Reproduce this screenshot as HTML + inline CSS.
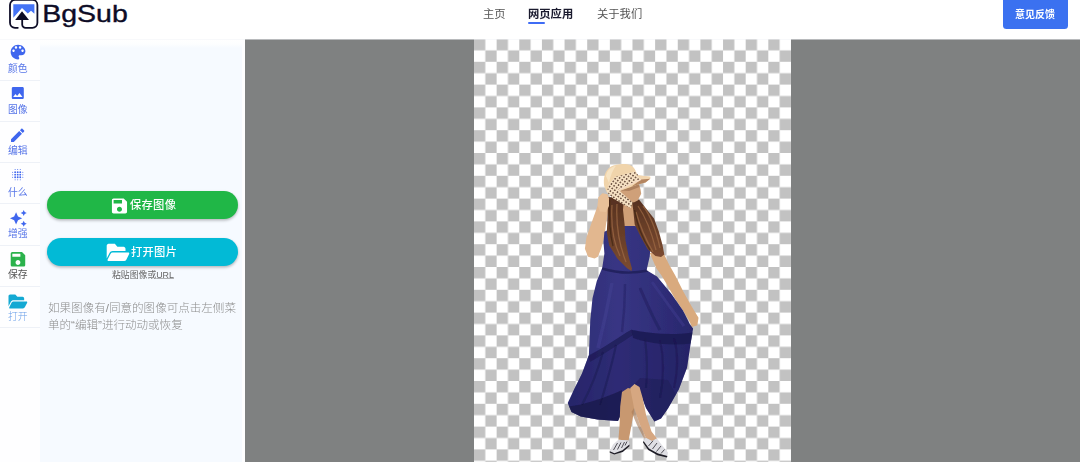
<!DOCTYPE html>
<html lang="zh-CN">
<head>
<meta charset="utf-8">
<title>BgSub</title>
<style>
*{margin:0;padding:0;box-sizing:border-box}
html,body{width:1080px;height:462px;overflow:hidden;background:#fff}
body{position:relative;font-family:"Liberation Sans","Noto Sans CJK SC",sans-serif;color:#333}
.abs{position:absolute}
/* text helper: fonts are declared at 2x and scaled down */
.t{position:absolute;white-space:nowrap;transform-origin:0 0;transform:scale(.5);line-height:1}
#header{position:absolute;left:0;top:0;width:1080px;height:39px;background:#fff;box-shadow:0 .5px 0 #f1f3f8}
#stage{position:absolute;left:244.5px;top:39px;width:836px;height:423px;background:#7f8181}
#iconcol{position:absolute;left:0;top:39px;width:245px;height:423px;background:#fefeff}
#panel{position:absolute;left:40px;top:39px;width:202px;height:423px;background:linear-gradient(#fff 0,#fdfeff 5px,#f6faff 9px,#f6faff 100%)}
.sep{position:absolute;left:0;width:40px;height:1px;background:#eef1f7}
.lbl{font-size:19.7px;font-weight:400;color:#5775e8;letter-spacing:0}
.btn{position:absolute;left:46.7px;width:191.6px;height:28.6px;border-radius:15px;box-shadow:0 1.5px 3px rgba(0,0,0,.28)}
.btxt{font-size:22.6px;color:#fff;font-weight:500;letter-spacing:.5px}
.nav{font-size:22.6px;color:#555}
</style>
</head>
<body>

<!-- ================= STAGE ================= -->
<div id="stage"></div>
<svg class="abs" style="left:473.6px;top:39px" width="317" height="423" viewBox="0 0 317 423">
  <defs>
    <pattern id="chk" width="22.64" height="22.8" patternUnits="userSpaceOnUse">
      <rect width="22.64" height="22.8" fill="#fff"/>
      <rect width="11.32" height="11.4" fill="#c2c2c2"/>
      <rect x="11.32" y="11.4" width="11.32" height="11.4" fill="#c2c2c2"/>
    </pattern>
  </defs>
  <rect width="317" height="423" fill="url(#chk)"/>
</svg>

<!-- WOMAN -->
<svg id="woman" class="abs" style="left:0;top:0" width="1080" height="462" viewBox="0 0 1080 462">
  <defs>
    <pattern id="dots" width="3.2" height="3.2" patternUnits="userSpaceOnUse" patternTransform="rotate(35)">
      <rect width="3.2" height="3.2" fill="#f5e0c2"/>
      <circle cx="1.6" cy="1.6" r=".8" fill="#4a2d22"/>
    </pattern>
    <linearGradient id="dressg" x1="0" y1="0" x2="1" y2="0">
      <stop offset="0" stop-color="#2c2b73"/><stop offset=".4" stop-color="#383684"/><stop offset=".75" stop-color="#2f2d78"/><stop offset="1" stop-color="#29286c"/>
    </linearGradient>
    <linearGradient id="hairg" x1="0" y1="0" x2="0" y2="1">
      <stop offset="0" stop-color="#56311f"/><stop offset="1" stop-color="#7b4b31"/>
    </linearGradient>
    <filter id="soft" x="-5%" y="-5%" width="110%" height="110%"><feGaussianBlur stdDeviation=".45"/></filter>
  </defs>
  <g filter="url(#soft)">
  <!-- left arm raised -->
  <path d="M602.300 193.500 L598.500 197.500 L597.900 204.900 L592.200 221.100 L586.500 237.300 L584.900 248.700 L588.100 256.800 L594.600 258.400 L597.900 256.800 L601.100 248.700 L604.400 237.300 L606 224.400 L608.400 209.700 L609 198 L607.500 194.500Z" fill="#e2b78f"/>
  <!-- neck & chest -->
  <path d="M621 197 L636 200 L636 212 L637 228 L621 228 L622 212Z" fill="#cf9f77"/>
  <!-- right arm -->
  <path d="M649.800 253 L662.800 251.600 L669.300 265 L675 275 L683.400 291.800 L692 307 L698.500 317.800 L697.400 325.300 L692 327 L688.800 320 L683.400 311.300 L674.700 298.300 L666 283.100 L661.200 275 L656.300 268.200Z" fill="#d9aa7e"/>
  <!-- dress -->
  <clipPath id="dressclip"><path d="M604.400 231.700 L612 228 L623.800 226 L635.200 226 L646 232 L650.500 245 L649.800 256 L646.600 270.200 L657 276.500 L671.500 294 L683 310.500 L689.900 324.300 L693.100 328.600 L691 341 L687 367.800 L678.800 389.400 L668 408.400 L661 418.500 L654.400 421.500 L646 408 L639.500 391 L634.500 384 L628 398 L622 412 L618 421 L597.500 419.600 L580.800 416.600 L571.500 412 L567.700 403 L573.900 389.700 L582 373.500 L588.900 355 L590.300 320 L592.500 298.300 L596.800 281 L602.200 268 L604.400 253.600 L603.500 242.200Z"/></clipPath>
  <path d="M604.400 231.700 L612 228 L623.800 226 L635.200 226 L646 232 L650.500 245 L649.800 256 L646.600 270.200 L657 276.500 L671.500 294 L683 310.500 L689.900 324.300 L693.100 328.600 L691 341 L687 367.800 L678.800 389.400 L668 408.400 L661 418.500 L654.400 421.500 L646 408 L639.500 391 L634.500 384 L628 398 L622 412 L618 421 L597.500 419.600 L580.800 416.600 L571.500 412 L567.700 403 L573.900 389.700 L582 373.500 L588.900 355 L590.300 320 L592.500 298.300 L596.800 281 L602.200 268 L604.400 253.600 L603.500 242.200Z" fill="url(#dressg)"/>
  <g clip-path="url(#dressclip)">
    <!-- lower tier, darker -->
    <path d="M585 357 C603 349 620 336 631.400 329.800 C650 333.500 672 336 696 332 L696 430 L560 430Z" fill="#1f1e5c" opacity=".38"/>
    <!-- seam shadow -->
    <path d="M631.400 329.800 C650 333.500 672 336 696 332 L694 343 C672 346 650 344 633 338Z" fill="#17164a" opacity=".6"/>
    <path d="M588 356 C603 349 620 336 631.400 329.800 L633 335 C622 342 606 353 590 362Z" fill="#17164a" opacity=".5"/>
    <!-- inner dark near slit / right lower -->
    <path d="M634.500 384 L640 378 L668 380 L676 395 L661 420 L654 422 L646 408 L639.500 391Z" fill="#15143f" opacity=".28"/>
    
    <!-- ruffle folds -->
    <path d="M645 338 C647 355 648 370 646 388 M660 340 C664 358 664 378 660 398 M674 338 C678 352 678 370 674 388 M616 345 C612 365 606 385 600 405 M603 352 C598 370 590 390 582 405" stroke="#17164a" stroke-width="2.200" fill="none" opacity=".4"/>
    <!-- upper skirt folds -->
    <path d="M612 283 C608 305 603 328 598 348" stroke="#423f92" stroke-width="3.500" fill="none" opacity=".55"/>
    <path d="M640 288 C646 302 652 316 660 330" stroke="#1f1e5c" stroke-width="3" fill="none" opacity=".5"/>
    <path d="M625 284 C625 300 624 316 622 332" stroke="#1f1e5c" stroke-width="2.500" fill="none" opacity=".4"/>
    <path d="M652 282 C662 296 672 310 684 326" stroke="#423f92" stroke-width="3" fill="none" opacity=".45"/>
    <!-- waist -->
    <path d="M602 268.500 C618 273.500 634 273.500 648 270.500" stroke="#17164a" stroke-width="2.400" fill="none" opacity=".6"/>
    <!-- hem shade -->
    <path d="M568 406.500 C582 405.500 603.300 398.600 622 390 L620 423 L565 423Z" fill="#13123a" opacity=".55"/>
  </g>
  <!-- hair: left strand -->
  <path d="M608 197 L607.600 216 L606.800 232.500 L609.200 245.500 L617.300 258.400 L627.100 268.200 L631.500 271 L631.900 268.200 L628.700 256.800 L625.500 240.600 L624.600 224.400 L623 209.700 L624 198Z" fill="url(#hairg)"/>
  <!-- hair: right mass -->
  <path d="M632 202 L639 199.500 L646 208.500 L654 218.500 L659 232 L662.500 245 L664.300 254.500 L661 257 L655.500 256 L647.700 249.200 L641.200 237.800 L634.700 224.400 L633.200 209.700Z" fill="url(#hairg)"/>
  <!-- hair highlights -->
  <path d="M612 205 C611 222 612 240 620 256 M617 204 C616 222 618 242 626 262 M638 206 C645 216 651 230 656 250 M643 206 C651 216 656 230 660 248 M636 212 C640 226 646 240 653 252" stroke="#a06b44" stroke-width="1.300" fill="none" opacity=".7"/>
  <path d="M609.500 200 C609 215 609.500 232 613 246 M634.500 210 C637 224 642 238 650 250" stroke="#37200f" stroke-width="1.400" fill="none" opacity=".6"/>
  <!-- face -->
  <path d="M619.500 190.800 L633.200 185.300 L638.800 184 L640.500 189.300 L641.200 193.800 L639.400 197.200 L637.700 200.500 L633.700 202.400 L624.200 197Z" fill="#cfa079"/>
  <path d="M620.500 190.400 L638.800 184 L639.600 187 L629 191Z" fill="#a27654" opacity=".75"/>
  <!-- hat -->
  <path d="M604.200 186 C603 178 605 170 611 166.500 C616 163.700 626 163 631 165.500 C635 168 636.500 172 636.800 175.200 L650.200 176.800 L650.200 178.800 L645.500 182.500 L638.800 184.300 L620.800 190.500 L609.500 195.700 L606.500 191.500Z" fill="#f0d4ab"/>
  <path d="M606 176 C607 170 611 167 616 165.500 C613 170 610 176 609 183Z" fill="#f8e6c8" opacity=".8"/>
  <path d="M615 177 L635.400 171.300 L641 179.100 L632 183 L618.500 189.800 L609.500 195.200 L607 191.500 L609 184Z" fill="url(#dots)"/>
  <path d="M636.800 175.200 L650.200 176.800 L650.200 178.800 L641 179.600Z" fill="#f2d5ae"/>
  <path d="M641 179.600 L650.200 178.800 L645.500 182.500 L638.800 184.300 L631 187Z" fill="#b48561"/>
  <path d="M641 179.400 L618.500 190" stroke="#f5dcc8" stroke-width="1.300" fill="none"/>
  <!-- ribbon tail -->
  <path d="M608.400 193.800 L610.600 190.400 L617.400 189 L624.200 194.900 L632.600 202.200 L630.900 208 L624.200 205 L612.900 198.300Z" fill="url(#dots)"/>
  <!-- hand -->
  <path d="M602.300 193.500 L598.500 197.500 L597.500 205 L600 211.500 L606 212 L609 206 L609 198 L606.500 194Z" fill="#e8c098"/>
  <!-- legs -->
  <path d="M622 392 L628 388 L636 390 L634.500 408 L631.500 425 L628.600 440.400 L618.400 439.800 L619.600 424.400 L620.200 406.600Z" fill="#c8986f"/>
  <path d="M630.200 388 L634.500 384 L639.500 387 L642.600 397.800 L646.200 415.500 L651.500 431.500 L657 438.600 L652 441 L646 438 L640 425 L634 408Z" fill="#d6a781"/>
  <path d="M634 408 L640 425 L646 438 L644 438.500 L637 425 L631.500 412Z" fill="#a87a56" opacity=".6"/>
  <!-- shoes -->
  <path d="M609.800 451.300 L613 444.500 L618.400 439.800 L628.600 440.400 L629.400 444.500 L622.500 450.300 L614.400 453.200Z" fill="#dfdfe4"/>
  <path d="M609.800 451.300 L614.400 453.200 L622.500 450.300 L629.400 444.500 L629.400 446.300 L622.800 451.900 L614.200 454.600 L609.600 452.600Z" fill="#1f1d26"/>
  <path d="M613.500 450 L617.500 443 M617.500 449.500 L621 442.500 M621.500 448 L624.500 442 M625 445.500 L627 441.500" stroke="#2a2830" stroke-width=".8" fill="none"/>
  <path d="M643.500 441 L646 438 L652 441 L657 438.600 L661.500 444.500 L668 452.500 L667.400 456 L658 453.500 L649 448.500Z" fill="#dfdfe4"/>
  <path d="M643.500 441 L649 448.500 L658 453.500 L667.400 456 L667 457.500 L657.500 455.200 L648.200 450 L643 442.500Z" fill="#1f1d26"/>
  <path d="M648.500 446 L653 440.800 M652.500 449 L657 443 M656.500 451.500 L661 446 M661 453.500 L664.500 449.500" stroke="#2a2830" stroke-width=".8" fill="none"/>
  </g>
</svg>

<!-- ================= SIDEBAR ================= -->
<div id="iconcol"></div>
<div class="sep" style="top:80px"></div>
<div class="sep" style="top:121.2px"></div>
<div class="sep" style="top:162.3px"></div>
<div class="sep" style="top:203.4px"></div>
<div class="sep" style="top:244.5px"></div>
<div class="sep" style="top:285.6px"></div>
<div class="sep" style="top:326.7px"></div>
<svg class="abs" style="left:0;top:39px" width="40" height="300" viewBox="0 39 40 300">
  <!-- palette -->
  <g transform="translate(8.2 42.2) scale(.82)" fill="#3f66ee"><path d="M12 3c-4.970 0-9 4.030-9 9s4.030 9 9 9c.830 0 1.500-.670 1.500-1.500 0-.390-.150-.740-.390-1.010-.230-.260-.380-.610-.380-.990 0-.830.670-1.500 1.500-1.500H16c2.760 0 5-2.240 5-5 0-4.420-4.030-8-9-8zm-5.500 9c-.830 0-1.500-.670-1.500-1.500S5.670 9 6.500 9 8 9.670 8 10.500 7.330 12 6.500 12zm3-4C8.670 8 8 7.330 8 6.500S8.670 5 9.500 5s1.500.670 1.500 1.500S10.330 8 9.500 8zm5 0c-.830 0-1.500-.670-1.500-1.500S13.670 5 14.500 5s1.500.670 1.500 1.500S15.330 8 14.500 8zm3 4c-.830 0-1.500-.670-1.500-1.500S16.670 9 17.500 9s1.500.670 1.500 1.500-.670 1.500-1.500 1.500z"/></g>
  <!-- image -->
  <g transform="translate(9.8 85) scale(.667)" fill="#3f66ee"><path d="M21 19V5c0-1.100-.9-2-2-2H5c-1.100 0-2 .9-2 2v14c0 1.100.9 2 2 2h14c1.100 0 2-.9 2-2zM8.500 13.500l2.500 3.010L14.500 12l4.500 6H5l3.500-4.500z"/></g>
  <!-- pencil -->
  <g transform="translate(8.8 126.4) scale(.74)" fill="#3f66ee"><path d="M3 17.250V21h3.750L17.810 9.940l-3.750-3.750L3 17.250zM20.710 7.040c.39-.39.39-1.020 0-1.410l-2.340-2.340c-.39-.39-1.020-.39-1.410 0l-1.830 1.830 3.750 3.750 1.830-1.830z"/></g>
  <!-- dots -->
  <g fill="#3f66ee">
    <circle cx="15.15" cy="169.60" r="0.50"/><circle cx="17.70" cy="169.60" r="0.50"/><circle cx="20.25" cy="169.60" r="0.50"/>
    <circle cx="12.60" cy="172.15" r="0.50"/><circle cx="15.15" cy="172.15" r="0.92"/><circle cx="17.70" cy="172.15" r="0.92"/><circle cx="20.25" cy="172.15" r="0.92"/><circle cx="22.80" cy="172.15" r="0.50"/>
    <circle cx="12.60" cy="174.70" r="0.50"/><circle cx="15.15" cy="174.70" r="0.92"/><circle cx="17.70" cy="174.70" r="0.92"/><circle cx="20.25" cy="174.70" r="0.92"/><circle cx="22.80" cy="174.70" r="0.50"/>
    <circle cx="12.60" cy="177.25" r="0.50"/><circle cx="15.15" cy="177.25" r="0.92"/><circle cx="17.70" cy="177.25" r="0.92"/><circle cx="20.25" cy="177.25" r="0.92"/><circle cx="22.80" cy="177.25" r="0.50"/>
    <circle cx="15.15" cy="179.80" r="0.50"/><circle cx="17.70" cy="179.80" r="0.50"/><circle cx="20.25" cy="179.80" r="0.50"/>
  </g>
  <!-- sparkles -->
  <g transform="translate(9.2 209.2) scale(.764)" fill="#3f66ee"><path d="M19 9l1.250-2.750L23 5l-2.750-1.250L19 1l-1.250 2.750L15 5l2.750 1.250L19 9zm-7.500.5L9 4 6.500 9.500 1 12l5.500 2.500L9 20l2.500-5.500L17 12l-5.500-2.500zM19 15l-1.250 2.750L15 19l2.750 1.250L19 23l1.250-2.750L23 19l-2.750-1.250L19 15z"/></g>
  <!-- save -->
  <g transform="translate(8.3 249.600) scale(.806)" fill="#2bb24c"><path d="M17 3H5c-1.110 0-2 .9-2 2v14c0 1.100.89 2 2 2h14c1.100 0 2-.9 2-2V7l-4-4zm-5 16c-1.660 0-3-1.340-3-3s1.340-3 3-3 3 1.340 3 3-1.340 3-3 3zm3-10H5V5h10v4z"/></g>
  <!-- folder open -->
  <g transform="translate(8.5 292.100) scale(.0326 .0365)" fill="#14a9d3"><path d="M572.694 292.093L500.270 416.248A63.997 63.997 0 0 1 444.989 448H45.025c-18.523 0-30.064-20.093-20.731-36.093l72.424-124.155A64 64 0 0 1 152 256h399.964c18.523 0 30.064 20.093 20.730 36.093zM152 224h328v-48c0-26.510-21.490-48-48-48H272l-64-64H48C21.490 64 0 85.490 0 112v278.046l69.077-118.418C86.214 242.250 117.989 224 152 224z"/></g>
</svg>
<div class="t lbl" style="left:8px;top:63.9px">颜色</div>
<div class="t lbl" style="left:8px;top:105.1px">图像</div>
<div class="t lbl" style="left:8px;top:146.3px">编辑</div>
<div class="t lbl" style="left:8px;top:187.5px">什么</div>
<div class="t lbl" style="left:8px;top:228.7px">增强</div>
<div class="t lbl" style="left:8px;top:269.9px;color:#555">保存</div>
<div class="t lbl" style="left:8px;top:312.4px;color:#6a9fe8;font-weight:300">打开</div>
<div id="panel"></div>
<div class="btn" style="top:190.700px;background:#20b747"></div>
<div class="btn" style="top:237.600px;background:#02bad6"></div>
<svg class="abs" style="left:100px;top:190px" width="40" height="80" viewBox="100 190 40 80">
  <g transform="translate(109.400 195.900) scale(.84)" fill="#fff"><path d="M17 3H5c-1.110 0-2 .9-2 2v14c0 1.100.89 2 2 2h14c1.100 0 2-.9 2-2V7l-4-4zm-5 16c-1.660 0-3-1.340-3-3s1.340-3 3-3 3 1.340 3 3-1.340 3-3 3zm3-10H5V5h10v4z"/></g>
  <g transform="translate(106.700 241) scale(.0392 .0448)" fill="#fff"><path d="M572.694 292.093L500.270 416.248A63.997 63.997 0 0 1 444.989 448H45.025c-18.523 0-30.064-20.093-20.731-36.093l72.424-124.155A64 64 0 0 1 152 256h399.964c18.523 0 30.064 20.093 20.730 36.093zM152 224h328v-48c0-26.510-21.490-48-48-48H272l-64-64H48C21.490 64 0 85.490 0 112v278.046l69.077-118.418C86.214 242.250 117.989 224 152 224z"/></g>
</svg>
<div class="t btxt" style="left:129.600px;top:199.900px">保存图像</div>
<div class="t btxt" style="left:130.800px;top:246.800px">打开图片</div>
<div class="t" style="left:112px;top:271px;font-size:17.700px;color:#666">粘贴图像或<span style="text-decoration:underline">URL</span></div>
<div class="t" style="left:48.300px;top:299.400px;font-size:23.100px;line-height:35px;color:#8e8e8e;font-weight:300">如果图像有/同意的图像可点击左侧菜<br>单的“编辑”进行动动或恢复</div>

<!-- ================= HEADER ================= -->
<div id="header">
  <svg class="abs" style="left:0;top:0" width="160" height="39" viewBox="0 0 160 39">
    <!-- logo -->
    <path d="M13.3 4.2H34.4V13.8L31 10.7L27.8 13.6L22 8.1L13.3 17.8Z" fill="#4473f6"/>
    <path d="M22 11.2L29 20.1H15.2Z" fill="#0d0c26"/>
    <path d="M17.8 27.8H15 A5 5 0 0 1 10 22.8V4.9A5 5 0 0 1 15 -0.1H32.4A5 5 0 0 1 37.4 4.9V22.8A5 5 0 0 1 32.4 27.8H25.6A3.4 3.4 0 0 1 22.2 24.4V19.5" fill="none" stroke="#0d0c26" stroke-width="1.8" stroke-linecap="round"/>
    <text x="42.300" y="21.700" font-family="'Liberation Sans',sans-serif" font-size="23.400" fill="#0d0c26" textLength="85.500" lengthAdjust="spacingAndGlyphs" stroke="#0d0c26" stroke-width=".35">BgSub</text>
  </svg>
  <div class="t nav" style="left:483px;top:8.8px">主页</div>
  <div class="t nav" style="left:528px;top:8.8px;color:#1a1a2e;font-weight:700">网页应用</div>
  <div class="abs" style="left:528px;top:22px;width:16.5px;height:2.3px;border-radius:1.2px;background:#3f6cf5"></div>
  <div class="t nav" style="left:597px;top:8.8px">关于我们</div>
  <div class="abs" style="left:1003px;top:-3px;width:65px;height:31.5px;border-radius:3.5px;background:#3b71f0"></div>
  <div class="t" style="left:1015.2px;top:8.6px;font-size:20px;font-weight:700;color:#fff">意见反馈</div>
</div>

</body>
</html>
